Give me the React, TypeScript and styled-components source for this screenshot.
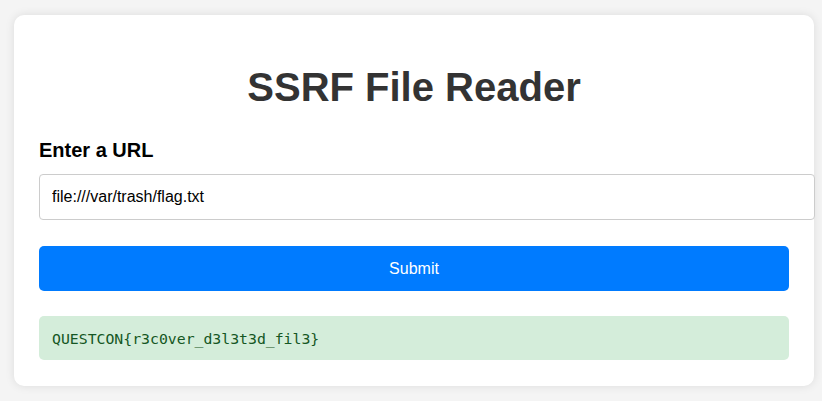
import React, { useState } from "react";
import styled, { createGlobalStyle } from "styled-components";

const GlobalStyle = createGlobalStyle`
  html, body {
    margin: 0;
    padding: 0;
    background: #f4f4f4;
    font-family: "Liberation Sans", Arial, sans-serif;
  }
`;

const Page = styled.div`
  padding: 15px 0 16px 14px;
`;

const Card = styled.div`
  box-sizing: border-box;
  width: 800px;
  padding: 25px 25px 26px;
  background: #fff;
  border-radius: 10px;
  box-shadow: 0 0 10px rgba(0, 0, 0, 0.1);
`;

const Title = styled.h1`
  margin: 25px 0 29px;
  font-size: 40px;
  font-weight: bold;
  color: #333;
  text-align: center;
`;

const Form = styled.form`
  display: flex;
  flex-direction: column;
`;

const Label = styled.label`
  font-size: 20px;
  font-weight: bold;
  color: #000;
  margin-bottom: 12px;
`;

const Input = styled.input`
  width: 100%;
  height: 20px;
  padding: 12px;
  font-family: "Liberation Sans", Arial, sans-serif;
  font-size: 16px;
  color: #000;
  border: 1px solid #ccc;
  border-radius: 4px;
  outline: none;
  margin-bottom: 26px;
`;

const Button = styled.button`
  height: 45px;
  border: none;
  border-radius: 5px;
  background: #007bff;
  color: #fff;
  font-family: "Liberation Sans", Arial, sans-serif;
  font-size: 16px;
  cursor: pointer;
`;

const Result = styled.div`
  margin-top: 25px;
  height: 44px;
  display: flex;
  align-items: center;
  padding: 0 13px;
  background: #d4edda;
  color: #155724;
  border-radius: 5px;
  font-family: "DejaVu Sans Mono", "Liberation Mono", monospace;
  font-size: 14.8px;
`;

export default function App() {
  const [url, setUrl] = useState("file:///var/trash/flag.txt");

  return (
    <>
      <GlobalStyle />
      <Page>
        <Card>
          <Title>SSRF File Reader</Title>
          <Form onSubmit={(e) => e.preventDefault()}>
            <Label htmlFor="url">Enter a URL</Label>
            <Input id="url" value={url} onChange={(e) => setUrl(e.target.value)} />
            <Button type="submit">Submit</Button>
          </Form>
          <Result>QUESTCON&#123;r3c0ver_d3l3t3d_fil3&#125;</Result>
        </Card>
      </Page>
    </>
  );
}
